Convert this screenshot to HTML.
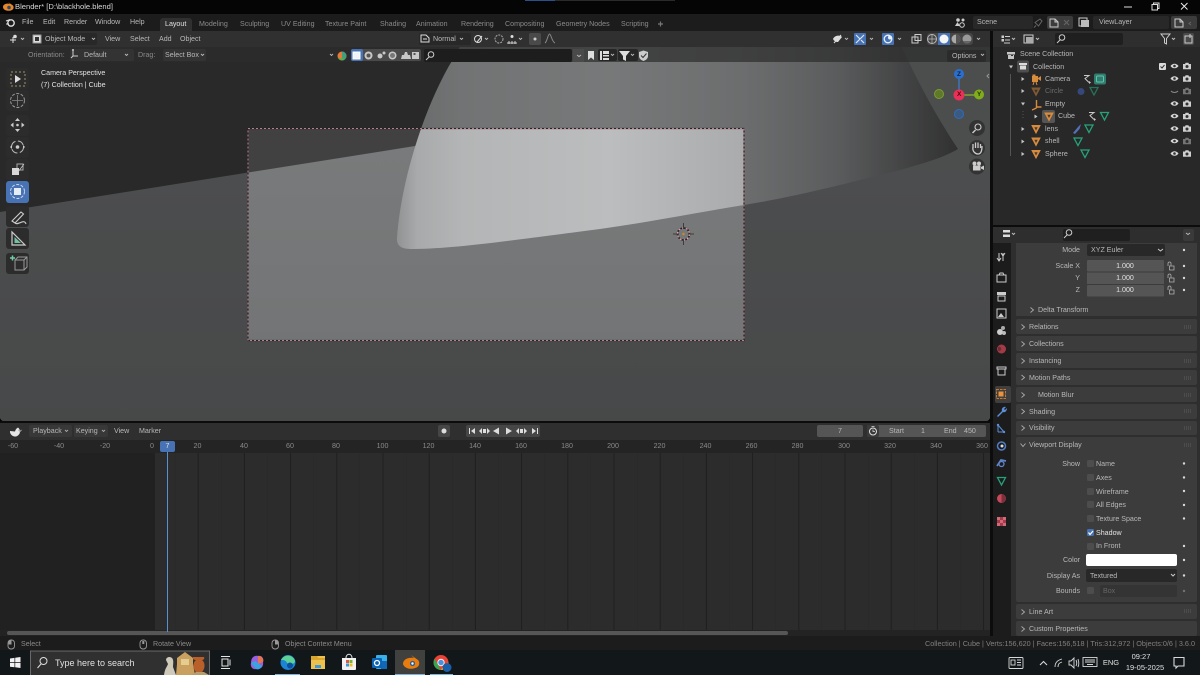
<!DOCTYPE html>
<html><head><meta charset="utf-8"><title>Blender</title>
<style>
html,body{margin:0;padding:0;background:#000;width:1200px;height:675px;overflow:hidden}
#w{position:relative;width:1200px;height:675px;overflow:hidden;font-family:"Liberation Sans",sans-serif;font-size:7.1px;color:#b8b8b8;filter:blur(.3px)}
.b{position:absolute}
.t{position:absolute;line-height:10px;white-space:nowrap}
.c{transform:translateX(-50%)}
.r{transform:translateX(-100%)}
.d{color:#8a8a8a}
.w{color:#e2e2e2}
svg{position:absolute;left:0;top:0}
.cb{position:absolute;width:7px;height:7px;background:#4d4d4d;border-radius:1.5px;left:1087px}
</style></head><body><div id="w">

<!-- base bars -->
<div class="b" style="left:0;top:0;width:1200px;height:14px;background:#050505"></div>
<div class="b" style="left:525px;top:0;width:30px;height:1px;background:#2b4f8f"></div>
<div class="b" style="left:555px;top:0;width:120px;height:1px;background:#2a2a2a"></div>
<div class="b" style="left:0;top:14px;width:1200px;height:17px;background:#1c1c1c"></div>
<div class="b" style="left:160px;top:18px;width:32px;height:13px;background:#303030;border-radius:3px 3px 0 0"></div>
<div class="b" style="left:973px;top:16px;width:60px;height:13px;background:#282828;border-radius:2px"></div>
<div class="b" style="left:1047px;top:16px;width:26px;height:13px;background:#3c3c3c;border-radius:2px"></div>
<div class="b" style="left:1093px;top:16px;width:76px;height:13px;background:#282828;border-radius:2px"></div>
<div class="b" style="left:1171px;top:16px;width:26px;height:13px;background:#3c3c3c;border-radius:2px"></div>

<!-- 3D viewport scene -->
<svg width="1200" height="675" viewBox="0 0 1200 675">
<defs>
<linearGradient id="dome" gradientUnits="userSpaceOnUse" x1="395" y1="0" x2="960" y2="0">
<stop offset="0" stop-color="#8e9091"/><stop offset=".04" stop-color="#a8aaab"/><stop offset=".12" stop-color="#b3b5b6"/><stop offset=".38" stop-color="#bbbdbe"/><stop offset=".62" stop-color="#a9abac"/><stop offset=".78" stop-color="#8f9192"/><stop offset=".9" stop-color="#6a6b6c"/><stop offset="1" stop-color="#4c4c4c"/>
</linearGradient>
<linearGradient id="floor" gradientUnits="userSpaceOnUse" x1="0" y1="150" x2="0" y2="421">
<stop offset="0" stop-color="#787a7b"/><stop offset="1" stop-color="#707273"/>
</linearGradient>
<clipPath id="vp"><rect x="0" y="31" width="990" height="390" rx="4"/></clipPath>
<pattern id="tl" patternUnits="userSpaceOnUse" x="151.5" y="0" width="46.2" height="10">
<rect width="46.2" height="10" fill="#2c2c2c"/><rect x="0" width="1" height="10" fill="#1f1f1f"/><rect x="23.1" width="1" height="10" fill="#2a2a2a"/>
</pattern>
</defs>
<g clip-path="url(#vp)">
<rect x="0" y="31" width="990" height="390" fill="#414141"/>
<path d="M0,212 L415,146 L890,31 L990,31 L990,421 L0,421 Z" fill="url(#floor)"/>
<path d="M468,31 L455,56 C430,95 402,170 397,238 Q396,249 410,249 C450,249 500,242 600,229 C650,222 700,212 744,205 C800,196 860,180 900,170 C925,163 945,157 958,149 C940,122 922,90 908,60 L893,31 Z" fill="url(#dome)"/>
<path fill-rule="evenodd" d="M0,31H990V421H0Z M248,128V340H744V128Z" fill="#000" opacity=".36"/>
<rect x="248" y="128.5" width="496" height="212" fill="none" stroke="#2b2226" stroke-width="1.2"/>
<rect x="248" y="128.5" width="496" height="212" fill="none" stroke="#b4808e" stroke-width="1" stroke-dasharray="2 2"/>
<!-- 3d cursor -->
<circle cx="683.5" cy="234" r="6" fill="none" stroke="#222" stroke-width="1.6"/>
<circle cx="683.5" cy="234" r="6" fill="none" stroke="#e8a0b0" stroke-width="1.3" stroke-dasharray="2 1.8"/>
<path d="M673,234H679M688,234H694M683.5,223V229M683.5,239V245" stroke="#3c3c3c" stroke-width="1"/>
<circle cx="683.5" cy="234" r="1.2" fill="#d08a20"/>
</g>

<!-- viewport headers -->
<rect x="0" y="31" width="990" height="16" fill="#303030"/>
<rect x="0" y="47" width="990" height="15" fill="#2c2c2c" opacity=".7"/>
<!-- header widgets -->
<rect x="31" y="33" width="66" height="12" rx="2" fill="#282828"/>
<rect x="419" y="33" width="52" height="12" rx="2" fill="#282828"/>
<rect x="529" y="33" width="12" height="12" rx="2" fill="#4a4a4a"/>
<rect x="854" y="33" width="12" height="12" rx="1" fill="#4772b3"/>
<rect x="882" y="33" width="12" height="12" rx="1" fill="#4772b3"/>
<rect x="927" y="33" width="46" height="12" rx="3" fill="#454545"/>
<rect x="938" y="33" width="12" height="12" fill="#4772b3"/>
<rect x="70" y="49" width="64" height="12" rx="2" fill="#333"/>
<rect x="163" y="49" width="43" height="12" rx="2" fill="#333"/>
<rect x="351" y="49" width="70" height="12" rx="2" fill="#4a4a4a"/>
<rect x="351" y="49" width="12" height="12" rx="2" fill="#4772b3"/>
<rect x="424" y="49" width="148" height="13" rx="2" fill="#1d1d1d"/>
<rect x="573" y="49" width="11" height="13" fill="#4a4a4a"/>
<rect x="598" y="49" width="19" height="12" rx="2" fill="#262626"/>
<rect x="618" y="49" width="20" height="12" rx="2" fill="#262626"/>
<rect x="947" y="50" width="39" height="12" rx="2" fill="#2b2b2b"/>

<!-- tool column -->
<g fill="#2c2c2c">
<rect x="6" y="68" width="23" height="21" rx="3"/><rect x="6" y="90" width="23" height="21" rx="3"/>
<rect x="6" y="115" width="23" height="21" rx="3"/><rect x="6" y="137" width="23" height="21" rx="3"/><rect x="6" y="159" width="23" height="21" rx="3"/>
<rect x="6" y="206" width="23" height="21" rx="3"/><rect x="6" y="228" width="23" height="21" rx="3"/><rect x="6" y="253" width="23" height="21" rx="3"/>
</g>
<rect x="6" y="181" width="23" height="22" rx="3" fill="#4772b3"/>
<rect x="11" y="72" width="14" height="14" fill="none" stroke="#9c8f6a" stroke-dasharray="2 2"/>
<path d="M15,75V83L21,79Z" fill="#ddd"/>
<circle cx="17.5" cy="100.500" r="7" fill="none" stroke="#999" stroke-dasharray="3 1.500"/><path d="M17.500,95V106M12,100.500H23" stroke="#888" stroke-width=".8"/>
<g fill="#ccc"><path d="M17.500,118l-2.500,3h5zM17.500,132l-2.500,-3h5zM10.500,125l3,-2.500v5zM24.500,125l-3,-2.500v5z"/><circle cx="17.500" cy="125" r="1.300"/></g>
<circle cx="17.500" cy="147" r="6" fill="none" stroke="#bbb" stroke-dasharray="7 2.500"/><circle cx="17.500" cy="147" r="1.800" fill="#ccc"/><path d="M10,147l2,-2v4zM25,147l-2,-2v4z" fill="#ccc"/>
<rect x="12" y="168" width="7" height="7" fill="#d8d8d8"/><path d="M17,168V164H23V170H19" fill="none" stroke="#aaa"/><path d="M18,172L24,164" stroke="#ccc" stroke-width=".7"/>
<circle cx="17.500" cy="191.500" r="7" fill="none" stroke="#c9d8ef" stroke-dasharray="3 1.500"/><rect x="14" y="188" width="7" height="7" fill="#e6ecf6"/>
<path d="M12,221L21,212L23.500,214L15,223ZM15,223C18,226 24,218 26,224" fill="none" stroke="#ccc" stroke-width="1.100"/>
<path d="M12,232V245H25Z" fill="none" stroke="#ccc" stroke-width="1.200"/><path d="M14.500,237V243H21Z" fill="#6fc4a0"/>
<path d="M15,260H24V270H15ZM15,260L18,257H27V267L24,270M24,260L27,257" fill="none" stroke="#999"/><path d="M10,258H15M12.500,255.500V260.500" stroke="#6fd0a8" stroke-width="1.500"/>

<!-- gizmo -->
<path d="M959,74V95" stroke="#3a7fd6" stroke-width="1.200"/><path d="M959,95H979" stroke="#8ab52a" stroke-width="1.200"/>
<circle cx="959" cy="74" r="5" fill="#2a6fd0"/><circle cx="979" cy="94.500" r="5" fill="#80ad1a"/><circle cx="959" cy="95" r="5.500" fill="#e8305a"/>
<circle cx="939" cy="94" r="4.500" fill="#5e7a28" stroke="#7d9c30"/><circle cx="959" cy="114" r="4.500" fill="#3a5a80" stroke="#2f6cc0"/>
<circle cx="977" cy="128" r="8" fill="#333"/><circle cx="977" cy="148" r="8" fill="#333"/><circle cx="977" cy="166.500" r="8" fill="#333"/>
<circle cx="978" cy="127" r="3" fill="none" stroke="#ccc" stroke-width="1.100"/><path d="M975.500,130L972.500,133" stroke="#ccc" stroke-width="1.400"/>
<path d="M973,148V144M975.500,148V142.500M978,148V142.500M980.500,148V144M973,147C972,152 976,154 978,154C981,154 982,151 982,146" fill="none" stroke="#ccc" stroke-width="1.300"/>
<circle cx="974.500" cy="163.500" r="2" fill="#ccc"/><circle cx="979" cy="163.500" r="2" fill="#ccc"/><rect x="973" y="165.500" width="7.500" height="5" fill="#ccc"/><path d="M981,167l3,-1.500v4.500l-3,-1.500z" fill="#ccc"/>
<path d="M989,74l-2,2 2,2" fill="none" stroke="#999"/>

<!-- area separators and right panels -->
<rect x="990" y="31" width="3" height="606" fill="#0c0c0c"/>
<rect x="0" y="421" width="990" height="2" fill="#0c0c0c"/>
<rect x="993" y="31" width="207" height="194" fill="#282828"/>
<rect x="993" y="31" width="207" height="16" fill="#2e2e2e"/>
<rect x="993" y="225" width="207" height="2" fill="#0c0c0c"/>
<rect x="1055" y="33" width="68" height="12" rx="2" fill="#1f1f1f"/>
<rect x="1183" y="33" width="11" height="12" rx="2" fill="#4a4a4a"/>
<rect x="993" y="227" width="207" height="16" fill="#2e2e2e"/>
<rect x="1063" y="229" width="67" height="12" rx="2" fill="#1f1f1f"/>
<rect x="1183" y="229" width="11" height="12" rx="2" fill="#3a3a3a"/>
<rect x="993" y="243" width="207" height="394" fill="#2e2e2e"/>
<rect x="993" y="243" width="18" height="394" fill="#1c1c1c"/>
<rect x="995" y="386" width="16" height="17" rx="2" fill="#3f3f3f"/>
<rect x="1016" y="243" width="181" height="73" fill="#3c3c3c"/>
<g fill="#3c3c3c">
<rect x="1016" y="319" width="181" height="15" rx="2"/><rect x="1016" y="336" width="181" height="15" rx="2"/><rect x="1016" y="353" width="181" height="15" rx="2"/><rect x="1016" y="370" width="181" height="15" rx="2"/><rect x="1016" y="387" width="181" height="15" rx="2"/><rect x="1016" y="404" width="181" height="15" rx="2"/><rect x="1016" y="421" width="181" height="14" rx="2"/><rect x="1016" y="437" width="181" height="165" rx="2"/><rect x="1016" y="604" width="181" height="15" rx="2"/><rect x="1016" y="621" width="181" height="15" rx="2"/>
</g>
<rect x="1087" y="244" width="78" height="12" rx="2" fill="#282828"/>
<rect x="1087" y="260" width="77" height="11.500" rx="1" fill="#555"/><rect x="1087" y="272.500" width="77" height="11.500" fill="#555"/><rect x="1087" y="285" width="77" height="11.500" rx="1" fill="#555"/>
<rect x="1086" y="554" width="91" height="12" rx="2" fill="#fff"/>
<rect x="1086" y="569" width="91" height="13" rx="2" fill="#282828"/>
<rect x="1100" y="585" width="77" height="12" rx="2" fill="#343434"/>

<!-- timeline -->
<rect x="0" y="423" width="990" height="17" fill="#2f2f2f"/>
<rect x="29" y="425" width="43" height="12" rx="2" fill="#383838"/><rect x="74" y="425" width="34" height="12" rx="2" fill="#383838"/>
<rect x="0" y="440" width="990" height="13" fill="#242424"/>
<rect x="0" y="453" width="990" height="177" fill="url(#tl)"/>
<rect x="0" y="453" width="155" height="177" fill="#212121"/>
<rect x="0" y="630" width="990" height="6" fill="#232323"/>
<rect x="7" y="631" width="781" height="4" rx="2" fill="#565656"/>
<rect x="167" y="452" width="1" height="180" fill="#5a8fd0"/>
<rect x="160" y="441" width="15" height="11" rx="2" fill="#4772b3"/>
<rect x="438" y="425" width="12" height="12" rx="2" fill="#464646"/><circle cx="444" cy="431" r="2.500" fill="#ddd"/>
<rect x="466" y="425" width="74" height="12" rx="2" fill="#464646"/>
<g fill="#ddd"><path d="M469,428h1v6h-1zM475,428v6l-4,-3z"/><path d="M482,428v6l-3,-3zM487,428v6l3,-3zM483,429h3v4h-3z"/><path d="M499,427.500v7l-6,-3.500z"/><path d="M506,427.500v7l6,-3.500z"/><path d="M519,428v6l-3,-3zM524,428v6l3,-3zM520,429h3v4h-3z"/><path d="M532,428v6l4,-3zM537,428h1v6h-1z"/></g>
<rect x="817" y="425" width="46" height="12" rx="2" fill="#555"/>
<rect x="867" y="425" width="119" height="12" rx="2" fill="#555"/>
<rect x="867" y="425" width="12" height="12" rx="2" fill="#3a3a3a"/>
<circle cx="873" cy="431.500" r="3.500" fill="none" stroke="#ddd"/><path d="M873,429.500V431.500H875M871.500,426.500H874.500" fill="none" stroke="#ddd" stroke-width=".8"/>
<path d="M10,431a5,5 0 1,0 8,-3.500a6,6 0 0,0 -3,4z" fill="#e6e6e6"/>
<g fill="none" stroke="#aaa" stroke-width=".9"><path d="M18.500,430l1.500,1.500 1.500,-1.500M65,430l1.500,1.500 1.500,-1.500M102,430l1.500,1.500 1.500,-1.500"/></g>

<!-- status bar -->
<rect x="0" y="636" width="1200" height="14" fill="#1c1c1c"/>
<g fill="none" stroke="#999" stroke-width=".9"><rect x="8" y="640" width="6.500" height="9" rx="3"/><rect x="140" y="640" width="6.500" height="9" rx="3"/><rect x="272" y="640" width="6.500" height="9" rx="3"/></g>
<rect x="8.500" y="640.500" width="3" height="4" fill="#999"/><rect x="142.300" y="641" width="2" height="3" fill="#999"/><rect x="275" y="640.500" width="3" height="4" fill="#999"/>

<!-- taskbar -->
<rect x="0" y="650" width="1200" height="25" fill="#12171a"/>
<rect x="30.500" y="651" width="179" height="26" fill="#303030" stroke="#6a6a6a"/>
<g fill="#f2f2f2"><path d="M10,658.500l4.500,-.6v4.300h-4.500zM15.200,657.800l5.300,-.8v5.200h-5.300zM10,663h4.500v4.300l-4.500,-.6zM15.200,663h5.300v5l-5.300,-.8z"/></g>
<circle cx="43.500" cy="661" r="3.500" fill="none" stroke="#ddd"/><path d="M41,664L37.500,668" stroke="#ddd"/>
<path d="M164,675C165,668 167,667 168,664L166,660C166,657 170,656 172,658C174,660 173,664 173,667L176,675Z" fill="#cfc9ba"/>
<path d="M177,664V658L185,652L193,658V664L195,675H176Z" fill="#c9a05f"/><rect x="181" y="659" width="8" height="6" fill="#e7cc90"/>
<path d="M193,657H204C205,659 203,660 202,660C206,663 205,670 201,673L201,675H197V673C193,670 192,663 196,660C194,660 192,659 193,657Z" fill="#b95f2a"/><path d="M191,675L196,672H204L209,675Z" fill="#b79c6c"/>
<g fill="none" stroke="#e6e6e6"><rect x="222" y="659" width="6" height="7"/><path d="M221,656.500h9M221,668.500h9M230,659.500v6"/></g>
<path d="M251,663C251,657 255,655 258,656C263,655 264,660 263,662C264,667 260,670 256,669C253,670 250,667 251,663Z" fill="#9a5fdc"/><path d="M258,656C262,655 264,660 263,662L258,664Z" fill="#e2774f"/><path d="M251,663L256,669C259,670 261,668 262,666L255,661Z" fill="#3aa4e0"/>
<circle cx="288" cy="662.500" r="7.500" fill="#1b84d6"/><path d="M281,660C284,654 293,654 295,661C295,665 289,664 287,663C286,660 283,660 281,660Z" fill="#5ed196"/><circle cx="290" cy="665.500" r="3" fill="#0d4f9c"/>
<path d="M311,656H325V669H311Z" fill="#eec14d"/><path d="M311,656h6l1.500,2h6.500v2h-14z" fill="#d9a531"/><rect x="315" y="665" width="6" height="3" fill="#3d9ad6"/>
<path d="M342,658H356V669Q356,670 355,670H343Q342,670 342,669Z" fill="#f2f2f2"/><path d="M346,658C346,653 352,653 352,658" fill="none" stroke="#ddd"/><rect x="346" y="660" width="3" height="3" fill="#e8553a"/><rect x="349.500" y="660" width="3" height="3" fill="#70b830"/><rect x="346" y="663.500" width="3" height="3" fill="#2e9ce8"/><rect x="349.500" y="663.500" width="3" height="3" fill="#f5bc1c"/>
<rect x="376" y="655" width="11" height="14" rx="1" fill="#38b0ea"/><path d="M381,661h6v8h-6z" fill="#1068b8"/><rect x="372" y="658" width="10" height="10" rx="1" fill="#0c64b4"/><circle cx="377" cy="663" r="2.500" fill="none" stroke="#fff" stroke-width="1.300"/>
<rect x="395" y="650" width="30" height="25" fill="#40403f"/>
<path d="M403,664C403,659 409,657 414,658L411,655L418,660C420,662 420,667 415,668C410,670 404,668 403,664ZM403,661L410,658" fill="#e87d0d"/><circle cx="412.500" cy="663.500" r="2.600" fill="#2a5d9a"/><circle cx="412.500" cy="663.500" r="1.200" fill="#fff"/>
<circle cx="441" cy="662.500" r="7.500" fill="#ea4335"/><path d="M441,670a7.500,7.500 0 0,1 -6.500,-11.200l4,7z" fill="#34a853"/><path d="M448.500,662.500a7.500,7.500 0 0,1 -7.500,7.500l3.500,-6z" fill="#fbbc05"/><circle cx="441" cy="662.500" r="3.200" fill="#4a90e0" stroke="#eee"/><circle cx="447" cy="667.500" r="4.500" fill="#1a5fa8"/>
<rect x="275" y="674" width="25" height="1" fill="#7ab4e8"/><rect x="395" y="674" width="30" height="1" fill="#7ab4e8"/><rect x="430" y="674" width="23" height="1" fill="#7ab4e8"/>
<g fill="none" stroke="#d8d8d8" stroke-width=".9"><rect x="1009" y="657.500" width="14" height="11" rx="1"/><rect x="1011" y="660" width="4" height="5"/><path d="M1017,660h4M1017,662.500h4M1017,665h4"/>
<path d="M1040,665l3.500,-3.500 3.500,3.500" stroke-width="1.100"/><path d="M1055,667c0,-5 3,-7 7,-8M1058,667c0,-3 1,-4 4,-5"/>
<path d="M1069,661h2l3,-3v10l-3,-3h-2zM1076,660c1,2 1,4 0,6M1078,659c1,3 1,6 0,8"/>
<rect x="1083" y="657.500" width="14" height="9"/><path d="M1085,660h10M1085,662h10M1087,664.500h6"/>
<path d="M1174,657.500h10v8.500h-6l-2,2v-2h-2z" stroke-width="1.100"/></g>

<!-- top icons -->
<path d="M3,7C3,4 7,3 10,4L8,2L13,5.500C14,7 14,9.500 11,10.500C7,11.500 3,10 3,7Z" fill="#e8862a"/><circle cx="9" cy="7.500" r="1.800" fill="#2c4a70"/>
<path d="M1124,7h8" stroke="#ddd"/><rect x="1152" y="4.500" width="5.500" height="5.500" fill="none" stroke="#ddd"/><path d="M1153.500,4.500V3H1159V8.500H1157.500" fill="none" stroke="#ddd"/><path d="M1181,3l6.500,6.500M1187.500,3L1181,9.500" stroke="#eee" stroke-width=".9"/>
<circle cx="11" cy="23" r="3.200" fill="none" stroke="#ddd" stroke-width="1.400"/><path d="M6,21L10,19.500M6,24H9" stroke="#ddd"/>
<path d="M660.500,21.500v5M658,24h5" stroke="#777" stroke-width="1.200"/>
<g fill="#ccc"><circle cx="958" cy="20" r="1.800"/><circle cx="963" cy="20" r="1.500"/><path d="M955,26l2.500,-4 2.500,4z"/></g><circle cx="962" cy="25" r="2.300" fill="none" stroke="#ccc"/>
<path d="M1035,22.500l5,-3.500 2,2 -3.500,5zM1036,25.500l-2,2" fill="none" stroke="#666"/>
<path d="M1050,19h5l3,3v5h-8zM1055,19v3h3" fill="none" stroke="#ccc"/><path d="M1064,20l5,5M1069,20l-5,5" stroke="#666"/>
<rect x="1079" y="18" width="8" height="8" fill="none" stroke="#ccc"/><rect x="1081" y="20" width="8" height="7" fill="#bbb"/>
<path d="M1175,19h5l3,3v5h-8zM1180,19v3h3" fill="none" stroke="#ccc"/><path d="M1191,22l-2,1.500 2,1.500" fill="none" stroke="#666"/>

<!-- header icons row 1 -->
<g fill="none" stroke="#ddd" stroke-width="1"><path d="M10,40h6M13,37v6"/></g><circle cx="15" cy="36.500" r="1.800" fill="#ddd"/><path d="M21,38l1.500,1.500 1.500,-1.500" fill="none" stroke="#bbb"/>
<rect x="33" y="35" width="8" height="8" fill="#ddd" stroke="#999"/><rect x="35" y="37" width="4" height="4" fill="#333"/>
<path d="M92,38l1.500,1.500 1.500,-1.500M460,38l1.500,1.500 1.500,-1.500M485,38l1.500,1.500 1.500,-1.500M519,38l1.500,1.500 1.500,-1.500M845,38l1.500,1.500 1.500,-1.500M870,38l1.500,1.500 1.500,-1.500M898,38l1.500,1.500 1.500,-1.500M977,38l1.500,1.500 1.500,-1.500M125,54l1.500,1.500 1.500,-1.500M201,54l1.500,1.500 1.500,-1.500M330,54l1.500,1.500 1.500,-1.500M611,54l1.500,1.500 1.500,-1.500M631,54l1.500,1.500 1.500,-1.500M981,54l1.500,1.500 1.500,-1.500M577,55l2,1.500 2,-1.500M1186,233l2,1.500 2,-1.500" fill="none" stroke="#bbb" stroke-width=".9"/>
<path d="M421,35h5l3,3v4h-8zM423,39h4" fill="none" stroke="#ddd"/>
<circle cx="478" cy="39" r="3.500" fill="none" stroke="#ddd"/><path d="M477,42l5,-6" stroke="#ddd"/>
<circle cx="499" cy="39" r="4" fill="none" stroke="#aaa" stroke-dasharray="2 1"/><path d="M507,43h10M509,41v3M512,41v3M515,41v3" stroke="#ccc"/><circle cx="512" cy="36.500" r="1.500" fill="#ddd"/>
<circle cx="535" cy="39" r="1.500" fill="#ccc"/><path d="M545,43C547,42 548,34 549.500,34C551,34 552,42 555,43" fill="none" stroke="#888"/>
<path d="M833,39C835,35 840,35 842,37L838,42C836,42 834,41 833,39Z" fill="#ddd"/><path d="M834,43l7,-8" stroke="#ddd"/>
<path d="M856,43L864,35M856,35L860,39M864,43L861,40" stroke="#dde8f8" stroke-width="1.200"/>
<circle cx="888" cy="39" r="3.800" fill="none" stroke="#e8f0fb" stroke-width="1.300"/><circle cx="890" cy="37.500" r="2" fill="#e8f0fb"/>
<rect x="912" y="37" width="6" height="6" fill="none" stroke="#ccc"/><rect x="915" y="34.500" width="6" height="6" fill="none" stroke="#ccc"/>
<circle cx="932" cy="39" r="4.500" fill="none" stroke="#bbb"/><path d="M927.500,39h9M932,34.500v9" stroke="#bbb" stroke-width=".7"/>
<circle cx="944" cy="39" r="4.500" fill="#f4f4f4"/><circle cx="956" cy="39" r="4.500" fill="#aaa"/><path d="M956,34.500a4.500,4.500 0 0,1 0,9z" fill="#555"/><circle cx="967" cy="39" r="4.500" fill="#999"/><path d="M963,41a4.500,4.500 0 0,0 8,0z" fill="#666"/>

<!-- row 2 icons -->
<path d="M73,50v6M73,56l-2,2M73,56h5" stroke="#ccc"/><circle cx="73" cy="50" r="1" fill="#ccc"/>
<circle cx="342" cy="56" r="4.500" fill="#e07b3a"/><path d="M342,51.500a4.500,4.500 0 0,1 0,9z" fill="#3f9f7f"/><path d="M338,58a4.500,4.500 0 0,0 7,1z" fill="#58b048"/>
<rect x="353" y="52" width="7" height="7" fill="#eef3fa" stroke="#fff"/>
<g fill="#c8c8c8"><circle cx="368.500" cy="55.500" r="4"/><circle cx="392.500" cy="55.500" r="4"/><circle cx="380" cy="56" r="2.500"/><circle cx="384" cy="53" r="1.500"/><path d="M401,59l1,-4h2l1,-3h2l1,3h2l1,4z"/><path d="M412,52h7v7h-7z"/></g>
<circle cx="368.500" cy="55.500" r="2" fill="#555"/><circle cx="392.500" cy="55.500" r="2.500" fill="#777"/><rect x="413.500" y="53" width="2" height="2" fill="#555"/>
<circle cx="431" cy="54.500" r="2.800" fill="none" stroke="#ccc"/><path d="M429,57l-3,3" stroke="#ccc"/>
<path d="M588,51h6v9l-3,-2.500 -3,2.500z" fill="#ddd"/>
<path d="M600,51h2v9h-2zM603,51h6v3h-6zM603,55h6v1.500h-6zM603,58h6v2h-6z" fill="#ddd"/>
<path d="M619,51h11l-4,5v5l-3,-1.500v-3.500z" fill="#ddd"/>
<path d="M643.500,50.500l4.500,1.500v4c0,3 -3,4.500 -4.500,5c-1.500,-.5 -4.500,-2 -4.500,-5v-4z" fill="#ccc"/><path d="M641,55.500l2,2 3.500,-4" fill="none" stroke="#333"/>

<!-- outliner icons -->
<symbol id="eye" overflow="visible"><path d="M-4,0C-2,-3 2,-3 4,0C2,3 -2,3 -4,0Z" fill="#d8d8d8"/><circle r="1.300" fill="#333"/></symbol>
<symbol id="cam" overflow="visible"><path d="M-4,-2h2l.6,-1.200h2.800l.6,1.200h2v5.200h-8z" fill="#d0d0d0"/><circle r="1.500" cy=".5" fill="#333"/></symbol>
<symbol id="mesh" overflow="visible"><path d="M-4,-3.500H4L0,4Z" fill="none" stroke="#27a37b" stroke-width="1.300"/></symbol>
<symbol id="obj" overflow="visible"><path d="M-4,-3.500H4L0,4Z" fill="#d98b3c" stroke="#d98b3c"/><path d="M-1.700,-1.800H1.700L0,1.500Z" fill="#3c3c3c"/></symbol>
<symbol id="con" overflow="visible"><path d="M-3,-3.500H2L-2,-.5L2,3.500" fill="none" stroke="#c9c9c9"/><path d="M2,2l2,1.500 -2,1.500z" fill="#c9c9c9"/></symbol>
<symbol id="ar" overflow="visible"><path d="M-1.500,-2L1.500,0L-1.500,2Z" fill="#c5c5c5"/></symbol>
<symbol id="ad" overflow="visible"><path d="M-2,-1.500L2,-1.500L0,1.500Z" fill="#c5c5c5"/></symbol>
<symbol id="dot" overflow="visible"><circle r="1.200" fill="#d8d8d8"/></symbol>
<symbol id="lock" overflow="visible"><path d="M-3,-1V-3.500Q-3,-5 -1.500,-5Q0,-5 0,-3.500V-1M-1.500,-1H3V3H-1.500Z" fill="none" stroke="#b0b0b0" stroke-width=".8"/></symbol>
<symbol id="rc" overflow="visible"><path d="M-1.500,-2.500L1.500,0L-1.500,2.500" fill="none" stroke="#aaa" stroke-width=".9"/></symbol>
<symbol id="dn" overflow="visible"><path d="M-2.500,-1.500L0,1.500L2.500,-1.500" fill="none" stroke="#aaa" stroke-width=".9"/></symbol>

<path d="M1002,36h1.500v1.500H1002zM1005,36.500h5M1002,39.500h1.500v1.500H1002zM1005,40h5M1004,43h6" stroke="#ccc" fill="#ccc" stroke-width="1"/>
<path d="M1012,38l1.500,1.500 1.500,-1.500M1036,38l1.500,1.500 1.500,-1.500M1172,38l1.500,1.500 1.500,-1.500" fill="none" stroke="#bbb"/>
<rect x="1024" y="35" width="9" height="8" fill="none" stroke="#ccc"/><rect x="1026" y="37" width="7" height="6" fill="#aaa"/>
<circle cx="1062" cy="37.500" r="2.800" fill="none" stroke="#ccc"/><path d="M1060,40l-3,3" stroke="#ccc"/>
<path d="M1161,34h9l-3.500,4.500v5.500l-2,-1v-4.500z" fill="none" stroke="#ccc"/>
<path d="M1185,36h7v7h-7zM1190,34v4M1188,36h4" fill="none" stroke="#ccc"/>
<path d="M1007,52h8v2.500h-8zM1008,55h6v4h-6z" fill="#c4c4c4"/>
<path d="M1011,55h2v1h-2z" fill="#333"/>
<rect x="1017" y="60.500" width="12" height="12" rx="2" fill="#4e4e4e"/><path d="M1019,63h8v2h-8zM1020,65.500h6v4h-6z" fill="#ddd"/>
<use href="#ad" x="1011" y="67"/><use href="#ar" x="1023" y="79"/><use href="#ar" x="1023" y="91"/><use href="#ad" x="1023" y="104"/><use href="#ar" x="1036" y="116.500"/><use href="#ar" x="1023" y="129"/><use href="#ar" x="1023" y="141.500"/><use href="#ar" x="1023" y="154"/>
<path d="M1010.500,74V156" stroke="#555"/><path d="M1023,111V120" stroke="#555" stroke-dasharray="1 2"/>
<path d="M1032,76h6v6h-6zM1032.500,74.500h3v1.500h-3zM1038,78l3,-2v5l-3,-2z" fill="#d98b3c"/><path d="M1034,82l-1,3M1036,82l1,3" stroke="#d98b3c"/>
<use href="#obj" x="1036" y="91.500" opacity=".5"/>
<path d="M1036.500,100V108M1036.500,108L1032,110M1036.500,107L1041.500,107" stroke="#d98b3c" stroke-width="1.400"/>
<rect x="1042" y="110" width="13" height="13" rx="2" fill="#555"/><use href="#obj" x="1049" y="116.500"/>
<use href="#obj" x="1036" y="129"/><use href="#obj" x="1036" y="141.500"/><use href="#obj" x="1036" y="154"/>
<use href="#con" x="1087" y="79"/><rect x="1094" y="73.500" width="12" height="11" rx="2" fill="#2f7d6e"/><rect x="1096.500" y="76" width="7" height="6" rx="1" fill="none" stroke="#66c0a8"/>
<circle cx="1081" cy="91.500" r="3.500" fill="#36477c"/><use href="#mesh" x="1094" y="91" opacity=".6"/>
<use href="#con" x="1092" y="116"/><use href="#mesh" x="1104.500" y="116"/>
<path d="M1073,133L1078,127L1081,124L1079.500,129L1075,134Z" fill="#5570b8"/><use href="#mesh" x="1089" y="128.500"/>
<use href="#mesh" x="1078" y="141.500"/><use href="#mesh" x="1085" y="153.500"/>
<rect x="1159" y="63" width="7" height="7" rx="1" fill="#dcdcdc"/><path d="M1160.500,66.500l1.500,1.500 2.500,-3" fill="none" stroke="#333"/>
<use href="#eye" x="1174.500" y="66"/><use href="#eye" x="1174.500" y="78.500"/><use href="#eye" x="1174.500" y="103.500"/><use href="#eye" x="1174.500" y="116"/><use href="#eye" x="1174.500" y="128.500"/><use href="#eye" x="1174.500" y="141"/><use href="#eye" x="1174.500" y="153.500"/>
<use href="#cam" x="1187" y="66"/><use href="#cam" x="1187" y="78.500"/><use href="#cam" x="1187" y="103.500"/><use href="#cam" x="1187" y="116"/><use href="#cam" x="1187" y="128.500"/><use href="#cam" x="1187" y="153.500"/>
<use href="#cam" x="1187" y="91" opacity=".45"/><use href="#cam" x="1187" y="141" opacity=".45"/>
<path d="M1171,91c2,2 5,2 7,0" fill="none" stroke="#888"/>

<!-- properties sidebar icons -->
<path d="M1003,230h7v2.500h-7zM1003,234.500h7v2.500h-7z" fill="#ddd"/><path d="M1012,233l1.500,1.500 1.500,-1.500" fill="none" stroke="#bbb"/>
<circle cx="1069" cy="232.500" r="2.800" fill="none" stroke="#ccc"/><path d="M1067,235l-3,3" stroke="#ccc"/>
<path d="M999,253v8M997,258l2,3 2,-3M1003,253v8M1001,253l2,3 2,-3" fill="none" stroke="#ccc"/>
<rect x="997" y="275" width="9" height="7" fill="none" stroke="#ccc"/><path d="M999,275l1,-2h3l1,2" stroke="#ccc" fill="none"/>
<rect x="997" y="292" width="9" height="3" fill="#ccc"/><rect x="998" y="296" width="7" height="5" fill="none" stroke="#ccc"/>
<rect x="997" y="309" width="9" height="9" fill="none" stroke="#ccc"/><path d="M998,317l3,-4 3,4z" fill="#ccc"/>
<circle cx="1000" cy="332" r="3" fill="#ccc"/><circle cx="1003" cy="328" r="2" fill="#aaa"/><circle cx="1004" cy="333" r="2" fill="#bbb"/>
<circle cx="1001.500" cy="349" r="4.500" fill="#a33b45"/><path d="M998,347c2,-1 4,1 3,3c-1,1 -2,2 -3,0z" fill="#6d2a3a"/>
<path d="M997,367h9v2h-9zM998,369h7v6h-7z" fill="none" stroke="#ccc"/>
<rect x="996.500" y="389.500" width="9" height="9" fill="none" stroke="#c47a30" stroke-dasharray="2.500 1"/><rect x="998.500" y="391.500" width="5" height="5" fill="#e8933f"/>
<path d="M997,416L1002,411C1001,408 1004,406 1006,407L1004,409L1005,410L1007,408C1007,411 1005,413 1003,412L998,417Z" fill="#5b8fd8"/>
<path d="M998,425L1004,432M998,425V432M1004,432H998" fill="none" stroke="#5b8fd8"/><circle cx="998" cy="425" r="1.200" fill="#5b8fd8"/><circle cx="1004" cy="432" r="1.200" fill="#5b8fd8"/>
<circle cx="1001.500" cy="446" r="4" fill="none" stroke="#4f7dc8" stroke-width="1.500"/><circle cx="1002" cy="446" r="1.500" fill="#ddd"/>
<path d="M997,466L1001,460L1006,461" fill="none" stroke="#5f83c8" stroke-width="1.800"/><circle cx="1001.500" cy="464" r="2.500" fill="none" stroke="#5f83c8" stroke-width="1.300"/>
<use href="#mesh" x="1001.500" y="481"/>
<circle cx="1001.500" cy="498.500" r="4.500" fill="#c8485a"/><path d="M1001.500,494a4.500,4.500 0 0,1 0,9z" fill="#7c2f3c"/>
<rect x="997" y="517" width="9" height="9" fill="#a33b4a"/><path d="M997,517h3v3h-3zM1003,517h3v3h-3zM1000,520h3v3h-3zM997,523h3v3h-3zM1003,523h3v3h-3z" fill="#d06a78"/>

<use href="#dot" x="1184" y="250"/><use href="#dot" x="1184" y="266"/><use href="#dot" x="1184" y="278"/><use href="#dot" x="1184" y="290"/>
<use href="#lock" x="1171" y="267"/><use href="#lock" x="1171" y="279"/><use href="#lock" x="1171" y="291"/>
<path d="M1158,249l2.500,2 2.500,-2M1171,574l2,2 2,-2" fill="none" stroke="#ccc"/>
<use href="#rc" x="1032" y="310"/><use href="#rc" x="1023" y="327"/><use href="#rc" x="1023" y="344"/><use href="#rc" x="1023" y="361"/><use href="#rc" x="1023" y="377.500"/><use href="#rc" x="1023" y="395"/><use href="#rc" x="1023" y="411.500"/><use href="#rc" x="1023" y="428"/><use href="#dn" x="1023" y="445"/><use href="#rc" x="1023" y="612"/><use href="#rc" x="1023" y="629"/>
<g fill="none" stroke="#5c5c5c" stroke-dasharray="1 1"><path d="M1184,326h7M1184,328h7M1184,360h7M1184,362h7M1184,377h7M1184,379h7M1184,394h7M1184,396h7M1184,410h7M1184,412h7M1184,427h7M1184,429h7M1184,444h7M1184,446h7M1184,610h7M1184,612h7"/></g>
<use href="#dot" x="1184" y="463.500"/><use href="#dot" x="1184" y="477.500"/><use href="#dot" x="1184" y="491"/><use href="#dot" x="1184" y="505"/><use href="#dot" x="1184" y="518.500"/><use href="#dot" x="1184" y="546"/><use href="#dot" x="1184" y="560"/><use href="#dot" x="1184" y="575.500"/><use href="#dot" x="1184" y="591" opacity=".35"/>
</svg>

<!-- checkboxes -->
<div class="cb" style="top:460px"></div><div class="cb" style="top:474px"></div><div class="cb" style="top:488px"></div><div class="cb" style="top:501px"></div><div class="cb" style="top:515px"></div>
<div class="cb" style="top:529px;background:#4772b3"></div><div class="cb" style="top:543px"></div><div class="cb" style="top:587px"></div>
<svg width="1200" height="675" style="pointer-events:none"><path d="M1088.500,532.500l1.500,2 3,-3.500" fill="none" stroke="#fff" stroke-width="1.200"/></svg>

<!-- title / top -->
<span class="t" style="left:15px;top:2px;font-size:7.600px;color:#d8d8d8">Blender* [D:\blackhole.blend]</span>
<span class="t" style="left:22px;top:17px">File</span><span class="t" style="left:43px;top:17px">Edit</span><span class="t" style="left:64px;top:17px">Render</span><span class="t" style="left:95px;top:17px">Window</span><span class="t" style="left:130px;top:17px">Help</span>
<span class="t w" style="left:165px;top:19px">Layout</span>
<span class="t d" style="left:199px;top:19px">Modeling</span><span class="t d" style="left:240px;top:19px">Sculpting</span><span class="t d" style="left:281px;top:19px">UV Editing</span><span class="t d" style="left:325px;top:19px">Texture Paint</span><span class="t d" style="left:380px;top:19px">Shading</span><span class="t d" style="left:416px;top:19px">Animation</span><span class="t d" style="left:461px;top:19px">Rendering</span><span class="t d" style="left:505px;top:19px">Compositing</span><span class="t d" style="left:556px;top:19px">Geometry Nodes</span><span class="t d" style="left:621px;top:19px">Scripting</span>
<span class="t" style="left:977px;top:17px">Scene</span><span class="t" style="left:1099px;top:17px">ViewLayer</span>

<!-- viewport text -->
<span class="t" style="left:45px;top:34px">Object Mode</span><span class="t" style="left:105px;top:34px">View</span><span class="t" style="left:130px;top:34px">Select</span><span class="t" style="left:159px;top:34px">Add</span><span class="t" style="left:180px;top:34px">Object</span>
<span class="t" style="left:433px;top:34px">Normal</span>
<span class="t d" style="left:28px;top:50px">Orientation:</span><span class="t" style="left:84px;top:50px">Default</span><span class="t d" style="left:138px;top:50px">Drag:</span><span class="t" style="left:165px;top:50px">Select Box</span><span class="t" style="left:952px;top:51px">Options</span>
<span class="t w" style="left:41px;top:68px">Camera Perspective</span><span class="t w" style="left:41px;top:80px">(7) Collection | Cube</span>
<span class="t" style="left:957px;top:69.500px;font-size:6.500px;font-weight:bold;color:#123">Z</span><span class="t" style="left:957px;top:90px;font-size:6.500px;font-weight:bold;color:#500">X</span><span class="t" style="left:977px;top:89.500px;font-size:6.500px;font-weight:bold;color:#230">Y</span>

<!-- timeline text -->
<span class="t" style="left:33px;top:426px">Playback</span><span class="t" style="left:76px;top:426px">Keying</span><span class="t" style="left:114px;top:426px">View</span><span class="t" style="left:139px;top:426px">Marker</span>
<span class="t c" style="left:840px;top:426px">7</span><span class="t" style="left:889px;top:426px">Start</span><span class="t" style="left:921px;top:426px">1</span><span class="t" style="left:944px;top:426px">End</span><span class="t" style="left:964px;top:426px">450</span>
<span class="t c d" style="left:13px;top:441px">-60</span><span class="t c d" style="left:59px;top:441px">-40</span><span class="t c d" style="left:105px;top:441px">-20</span><span class="t c d" style="left:152px;top:441px">0</span><span class="t c w" style="left:167.500px;top:441px">7</span><span class="t c d" style="left:197.500px;top:441px">20</span><span class="t c d" style="left:244px;top:441px">40</span><span class="t c d" style="left:290px;top:441px">60</span><span class="t c d" style="left:336px;top:441px">80</span><span class="t c d" style="left:382.500px;top:441px">100</span><span class="t c d" style="left:428.500px;top:441px">120</span><span class="t c d" style="left:475px;top:441px">140</span><span class="t c d" style="left:521px;top:441px">160</span><span class="t c d" style="left:567px;top:441px">180</span><span class="t c d" style="left:613px;top:441px">200</span><span class="t c d" style="left:659.500px;top:441px">220</span><span class="t c d" style="left:705.500px;top:441px">240</span><span class="t c d" style="left:751.500px;top:441px">260</span><span class="t c d" style="left:797.500px;top:441px">280</span><span class="t c d" style="left:844px;top:441px">300</span><span class="t c d" style="left:890px;top:441px">320</span><span class="t c d" style="left:936px;top:441px">340</span><span class="t c d" style="left:982px;top:441px">360</span>

<!-- status -->
<span class="t d" style="left:21px;top:639px">Select</span><span class="t d" style="left:153px;top:639px">Rotate View</span><span class="t d" style="left:285px;top:639px">Object Context Menu</span>
<span class="t r" style="left:1195px;top:639px;color:#808080;font-size:7.250px">Collection | Cube | Verts:156,620 | Faces:156,518 | Tris:312,972 | Objects:0/6 | 3.6.0</span>

<!-- taskbar text -->
<span class="t" style="left:55px;top:658px;font-size:9px;color:#e0e0e0">Type here to search</span>
<span class="t c" style="left:1111px;top:658px;font-size:7.500px;color:#e0e0e0">ENG</span>
<span class="t c" style="left:1141px;top:652px;font-size:7.500px;color:#e0e0e0">09:27</span>
<span class="t c" style="left:1145px;top:663px;font-size:7.500px;color:#e0e0e0">19-05-2025</span>

<!-- outliner text -->
<span class="t" style="left:1020px;top:49px">Scene Collection</span><span class="t" style="left:1033px;top:62px">Collection</span><span class="t" style="left:1045px;top:74px">Camera</span><span class="t" style="left:1045px;top:86px;color:#6a6a6a">Circle</span><span class="t" style="left:1045px;top:99px">Empty</span><span class="t" style="left:1058px;top:111px">Cube</span><span class="t" style="left:1045px;top:124px">lens</span><span class="t" style="left:1045px;top:136px">shell</span><span class="t" style="left:1045px;top:149px">Sphere</span>

<!-- properties text -->
<span class="t r" style="left:1080px;top:245px">Mode</span><span class="t" style="left:1091px;top:245px">XYZ Euler</span>
<span class="t r" style="left:1080px;top:261px">Scale X</span><span class="t r" style="left:1080px;top:273px">Y</span><span class="t r" style="left:1080px;top:285px">Z</span>
<span class="t c w" style="left:1125px;top:261px">1.000</span><span class="t c w" style="left:1125px;top:273px">1.000</span><span class="t c w" style="left:1125px;top:285px">1.000</span>
<span class="t" style="left:1038px;top:305px">Delta Transform</span>
<span class="t" style="left:1029px;top:322px">Relations</span><span class="t" style="left:1029px;top:339px">Collections</span><span class="t" style="left:1029px;top:356px">Instancing</span><span class="t" style="left:1029px;top:372.500px">Motion Paths</span><span class="t" style="left:1038px;top:390px">Motion Blur</span><span class="t" style="left:1029px;top:406.500px">Shading</span><span class="t" style="left:1029px;top:423px">Visibility</span><span class="t" style="left:1029px;top:440px">Viewport Display</span>
<span class="t r" style="left:1080px;top:459px">Show</span><span class="t" style="left:1096px;top:459px">Name</span><span class="t" style="left:1096px;top:472.500px">Axes</span><span class="t" style="left:1096px;top:486.500px">Wireframe</span><span class="t" style="left:1096px;top:500px">All Edges</span><span class="t" style="left:1096px;top:514px">Texture Space</span><span class="t w" style="left:1096px;top:527.500px">Shadow</span><span class="t" style="left:1096px;top:541px">In Front</span>
<span class="t r" style="left:1080px;top:555px">Color</span><span class="t r" style="left:1080px;top:570.500px">Display As</span><span class="t" style="left:1090px;top:570.500px">Textured</span><span class="t r" style="left:1080px;top:586px">Bounds</span><span class="t" style="left:1103px;top:586px;color:#666">Box</span>
<span class="t" style="left:1029px;top:607px">Line Art</span><span class="t" style="left:1029px;top:624px">Custom Properties</span>

</div></body></html>
